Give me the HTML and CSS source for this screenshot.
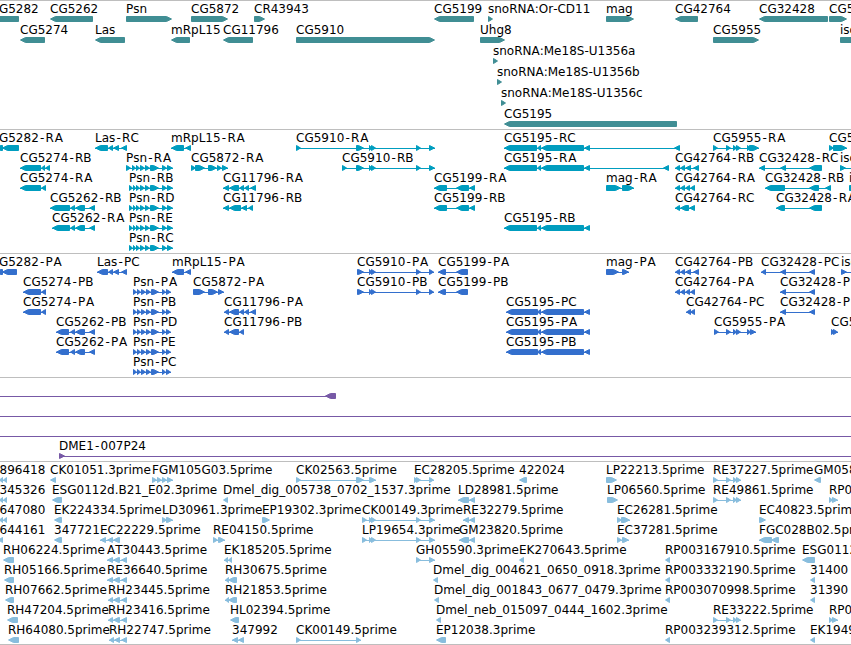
FILE: index.html
```html
<!DOCTYPE html>
<html lang="en">
<head>
    <meta charset="UTF-8" />
    <title>Genome region</title>
    <link rel="stylesheet" href="styles.css">
</head>
<body>

<div class="tracks">
    <svg class="track genes" id="genes"></svg>
    <svg class="track transcripts" id="transcripts"></svg>
    <svg class="track proteins" id="proteins"></svg>
    <svg class="track clones" id="clones"></svg>
    <svg class="track ests" id="ests"></svg>
</div>

<script src="tracks.js"></script>
</body>
</html>
```
FILE: styles.css
```css
body {
    margin: 0;
    background: #fff;
    overflow: hidden;
}
.tracks {
    display: flex;
    flex-direction: column;
    width: 851px;
    border-bottom: 1px solid #bebebe;
}
.track {
    display: block;
    box-sizing: border-box;
    width: 100%;
    border-top: 1px solid #bebebe;
    overflow: hidden;
}
.track text {
    font-family: "DejaVu Sans", sans-serif;
    font-size: 12px;
    font-kerning: none;
    fill: #000;
}
.genes {
    height: 129px;
    color: #408e94;
}
.transcripts {
    height: 124px;
    color: #009dbf;
}
.proteins {
    height: 124px;
    color: #336fcd;
}
.clones {
    height: 84px;
    color: #7759a6;
}
.ests {
    height: 183px;
    color: #88bddd;
}
.exon,
.intron {
    fill: currentColor;
}
.exon {
    stroke: currentColor;
    stroke-width: 1px;
    stroke-linejoin: round;
}
```
FILE: tracks.js
```js
const L = -1, R = 1;

// exon groups shared by several features
const psnR = [133,136, 136,140, 140,145, 145,150, 150,159, 162,167, 167,173];
const psnP = [133,137, 137,141, 141,146, 146,151, 151,159, 162,166, 166,171];
const end5910 = [369,372, 371,376, 416,421, 429,435];
const body5195 = [537,541, 541,584, 584,590];
const end5262 = [70,75, 75,85, 89,95];
const re5 = [713,718, 726,731, 733,737, 736,741];

// [row, label, strand, exon start/end pairs, label x if it is not the first start]
const data = {
    genes: [
        [0, 'CG5282', L, [-10,19], -9.5],
        [0, 'CG5262', L, [50,93]],
        [0, 'Psn', R, [126,172]],
        [0, 'CG5872', R, [191,228]],
        [0, 'CR43943', R, [254,265]],
        [0, 'CG5199', L, [434,474]],
        [0, 'snoRNA:Or-CD11', R, [488,493]],
        [0, 'mag', R, [606,634]],
        [0, 'CG42764', L, [675,698]],
        [0, 'CG32428', L, [759,828]],
        [0, 'CG5', R, [829,847]],
        [1, 'CG5274', L, [20,45]],
        [1, 'Las', L, [95,125]],
        [1, 'mRpL15', L, [171,190]],
        [1, 'CG11796', L, [223,253]],
        [1, 'CG5910', R, [296,435]],
        [1, 'Uhg8', R, [480,505]],
        [1, 'CG5955', R, [713,759]],
        [1, 'iso', R, [840,870]],
        [2, 'snoRNA:Me18S-U1356a', R, [493,498]],
        [3, 'snoRNA:Me18S-U1356b', R, [497,502]],
        [4, 'snoRNA:Me18S-U1356c', R, [501,506]],
        [5, 'CG5195', L, [504,677]]
    ],
    transcripts: [
        [0, 'CG5282-RA', L, [-5,3, 2,19], -9.5],
        [0, 'Las-RC', L, [95,108, 108,113, 113,119, 121,127]],
        [0, 'mRpL15-RA', L, [171,184, 185,191]],
        [0, 'CG5910-RA', R, [296,301, 356,364, ...end5910]],
        [0, 'CG5195-RC', L, [504,537, ...body5195, 674,680]],
        [0, 'CG5955-RA', R, [713,718, 726,731, 733,737, 736,741, 747,751, 749,759]],
        [0, 'CG5', R, [829,834, 833,847]],
        [1, 'CG5274-RB', L, [20,41, 41,45, 45,50]],
        [1, 'Psn-RA', R, [126,131, 132,136, ...psnR.slice(2)]],
        [1, 'CG5872-RA', R, [191,196, 195,205, 208,217, 217,222, 222,228]],
        [1, 'CG5910-RB', R, [342,347, 356,364, ...end5910]],
        [1, 'CG5195-RA', L, [504,537, ...body5195, 663,669]],
        [1, 'CG42764-RB', L, [675,680, 680,685, 685,691, 693,699]],
        [1, 'CG32428-RC', L, [759,765, 780,786, 809,822]],
        [1, 'iso', R, [840,846, 856,862]],
        [2, 'CG5274-RA', L, [20,41, 41,46]],
        [2, 'Psn-RB', R, [129,133, ...psnR]],
        [2, 'CG11796-RA', L, [223,229, 229,239, 239,244, 244,249, 250,256]],
        [2, 'CG5199-RA', L, [434,447, 456,469, 469,475]],
        [2, 'mag-RA', R, [606,621, 622,634]],
        [2, 'CG42764-RA', L, [675,680, 680,685, 685,690, 690,695]],
        [2, 'CG32428-RB', L, [765,785, 809,819, 825,831]],
        [2, 'iso', R, [849,862]],
        [3, 'CG5262-RB', L, [50,70, ...end5262]],
        [3, 'Psn-RD', R, [129,133, ...psnR]],
        [3, 'CG11796-RB', L, [223,229, 229,241, 241,247, 248,253]],
        [3, 'CG5199-RB', L, [434,447, 456,469, 469,475]],
        [3, 'CG42764-RC', L, [675,680, 680,689, 689,695]],
        [3, 'CG32428-RA', L, [776,785, 809,822]],
        [4, 'CG5262-RA', L, [52,70, ...end5262]],
        [4, 'Psn-RE', R, [129,133, ...psnR]],
        [4, 'CG5195-RB', L, [504,537, ...body5195]],
        [5, 'Psn-RC', R, [129,133, ...psnR]]
    ],
    proteins: [
        [0, 'CG5282-PA', L, [-5,3, 2,17], -9.5],
        [0, 'Las-PC', L, [97,108, 108,113, 113,119, 121,127]],
        [0, 'mRpL15-PA', L, [172,184, 185,191]],
        [0, 'CG5910-PA', R, [357,364, ...end5910.slice(0, 6), 429,434]],
        [0, 'CG5199-PA', L, [438,446, 456,468]],
        [0, 'mag-PA', R, [606,619, 622,629]],
        [0, 'CG42764-PB', L, [675,680, 680,685, 685,691, 693,699]],
        [0, 'CG32428-PC', L, [761,766, 780,786, 809,815]],
        [0, 'iso', R, [841,847, 856,862]],
        [1, 'CG5274-PB', L, [23,41, 41,46]],
        [1, 'Psn-PA', R, psnP],
        [1, 'CG5872-PA', R, [193,205, 208,218, 218,224]],
        [1, 'CG5910-PB', R, [357,364, ...end5910.slice(0, 6), 429,434]],
        [1, 'CG5199-PB', L, [438,446, 456,468]],
        [1, 'CG42764-PA', L, [675,680, 680,685, 685,690, 690,695]],
        [1, 'CG32428-P', L, [780,786, 809,815]],
        [2, 'CG5274-PA', L, [23,41, 41,46]],
        [2, 'Psn-PB', R, psnP],
        [2, 'CG11796-PA', L, [224,229, 229,239, 239,244, 244,249, 250,256]],
        [2, 'CG5195-PC', L, [506,538, ...body5195]],
        [2, 'CG42764-PC', L, [686,691, 690,695]],
        [2, 'CG32428-P', L, [780,786, 809,815]],
        [3, 'CG5262-PB', L, [56,69, ...end5262]],
        [3, 'Psn-PD', R, psnP],
        [3, 'CG11796-PB', L, [224,229, 229,239, 239,244]],
        [3, 'CG5195-PA', L, [506,538, ...body5195]],
        [3, 'CG5955-PA', R, [714,719, 726,731, 733,737, 736,741, 747,751, 750,756]],
        [3, 'CG5', R, [831,835, 833,838]],
        [4, 'CG5262-PA', L, [56,69, ...end5262]],
        [4, 'Psn-PE', R, psnP],
        [4, 'CG5195-PB', L, [506,538, ...body5195]],
        [5, 'Psn-PC', R, psnP]
    ],
    clones: [
        [0, '', L, [-20,-10, 325,336]],
        [1, '', R, [-20,-10, 860,870]],
        [2, '', R, [-20,-10, 860,870]],
        [3, 'DME1-007P24', R, [59,65, 860,870]]
    ],
    ests: [
        [0, '896418', L, [-1,3, 3,7], -0.5],
        [0, 'CK01051.3prime', L, [50,56]],
        [0, 'FGM105G03.5prime', R, [152,157, 157,162, 162,167, 167,173]],
        [0, 'CK02563.5prime', R, [296,301, 356,364, 369,376]],
        [0, 'EC28205.5prime', R, [414,418, 416,421, 429,434]],
        [0, '422024', L, [519,527]],
        [0, 'LP22213.5prime', R, [606,617]],
        [0, 'RE37227.5prime', R, re5],
        [0, 'GM058', L, [814,821]],
        [1, '345326', L, [-1,3, 3,7], -0.5],
        [1, 'ESG0112d.B21_E02.3prime', L, [52,62]],
        [1, 'Dmel_dig_005738_0702_1537.3prime', L, [223,228]],
        [1, 'LD28981.5prime', L, [458,469, 469,475]],
        [1, 'LP06560.5prime', R, [607,618]],
        [1, 'RE49861.5prime', R, re5],
        [1, 'RP0', R, [829,833, 832,838]],
        [2, '647080', L, [-1,3, 3,7], -0.5],
        [2, 'EK224334.5prime', L, [54,62]],
        [2, 'LD30961.3prime', R, [162,167, 166,173]],
        [2, 'EP19302.3prime', R, [262,270]],
        [2, 'CK00149.3prime', R, [362,367, ...end5910]],
        [2, 'RE32279.5prime', L, [463,469, 469,475]],
        [2, 'EC26281.5prime', R, [617,622, 621,630]],
        [2, 'EC40823.5prime', R, [759,766]],
        [3, '644161', L, [-2,3], -0.5],
        [3, '347721', L, [54,62]],
        [3, 'EC22229.5prime', L, [100,106, 107,113, 113,120]],
        [3, 'RE04150.5prime', R, [213,218, 218,225]],
        [3, 'LP19654.3prime', R, [362,367, ...end5910]],
        [3, 'GM23820.5prime', L, [459,469, 469,475]],
        [3, 'EC37281.5prime', R, [617,622, 622,629]],
        [3, 'FGC028B02.5prime', L, [759,772, 771,779]],
        [4, 'RH06224.5prime', L, [3,14]],
        [4, 'AT30443.5prime', L, [107,113, 113,120, 121,127]],
        [4, 'EK185205.5prime', L, [224,228, 228,232]],
        [4, 'GH05590.3prime', R, [416,421, 429,435]],
        [4, 'EK270643.5prime', L, [519,524]],
        [4, 'RP003167910.5prime', L, [665,670]],
        [4, 'ESG0112', L, [802,815]],
        [5, 'RH05166.5prime', L, [4,14]],
        [5, 'RE36640.5prime', L, [107,113, 113,120, 121,127]],
        [5, 'RH30675.5prime', L, [225,229, 228,237]],
        [5, 'Dmel_dig_004621_0650_0918.3prime', L, [433,438]],
        [5, 'RP003332190.5prime', L, [665,670]],
        [5, '31400', L, [810,815]],
        [6, 'RH07662.5prime', L, [5,14]],
        [6, 'RH23445.5prime', L, [108,113, 113,120, 121,127]],
        [6, 'RH21853.5prime', L, [225,229, 228,237]],
        [6, 'Dmel_dig_001843_0677_0479.3prime', L, [434,439]],
        [6, 'RP003070998.5prime', L, [665,670]],
        [6, '31390', L, [810,815]],
        [7, 'RH47204.5prime', L, [7,18]],
        [7, 'RH23416.5prime', L, [108,113, 113,120, 121,127]],
        [7, 'HL02394.5prime', L, [230,239]],
        [7, 'Dmel_neb_015097_0444_1602.3prime', L, [436,441]],
        [7, 'RE33222.5prime', R, re5],
        [7, 'RP0', R, [829,833, 832,838]],
        [8, 'RH64080.5prime', L, [8,19]],
        [8, 'RH22747.5prime', L, [109,114, 114,120, 121,127]],
        [8, '347992', L, [232,238, 238,244]],
        [8, 'CK00149.5prime', R, [296,301, 356,361]],
        [8, 'EP12038.3prime', L, [436,446]],
        [8, 'RP003239312.5prime', L, [665,670]],
        [8, 'EK1949', L, [810,815]]
    ]
};

function add(svg, name, attrs) {
    const el = document.createElementNS('http://www.w3.org/2000/svg', name);
    for (const key in attrs) el.setAttribute(key, attrs[key]);
    svg.appendChild(el);
    return el;
}

// box with a pointed end, 6px high with its 1px stroke
function exonPoints(start, end, y, strand) {
    const head = Math.min(5, end - start - 1);
    const x1 = start + 0.5, x2 = end - 0.5;
    const top = y + 0.5, mid = y + 3, bottom = y + 5.5;
    if (strand === L) {
        return `${x1},${mid} ${x1 + head},${top} ${x2},${top} ${x2},${bottom} ${x1 + head},${bottom}`;
    }
    return `${x1},${top} ${x2 - head},${top} ${x2},${mid} ${x2 - head},${bottom} ${x1},${bottom}`;
}

// a little air on both sides of the hyphen
function hyphenGaps(label) {
    const at = label.indexOf('-');
    if (at < 0 || label.startsWith('snoRNA')) return '0';
    const gaps = Array(at).fill(0).concat(1.2, 1.2);
    if (label.endsWith('A')) gaps.push(0.8);
    return gaps.join(' ');
}

for (const id in data) {
    const svg = document.getElementById(id);
    const pitch = id === 'genes' ? 21 : 20;

    for (const [row, label, strand, exons, labelX] of data[id]) {
        const y = row * pitch + 15;
        const first = exons[0];
        const last = exons[exons.length - 1];

        if (exons.length > 2) {
            add(svg, 'rect', { class: 'intron', x: first, y: y + 3, width: last - first, height: 1 });
        }
        for (let i = 0; i < exons.length; i += 2) {
            add(svg, 'polygon', { class: 'exon', points: exonPoints(exons[i], exons[i + 1], y, strand) });
        }
        if (label) {
            const x = labelX === undefined ? first : labelX;
            add(svg, 'text', { x: x, y: y - 3, dx: hyphenGaps(label) }).textContent = label;
        }
    }
}
```
